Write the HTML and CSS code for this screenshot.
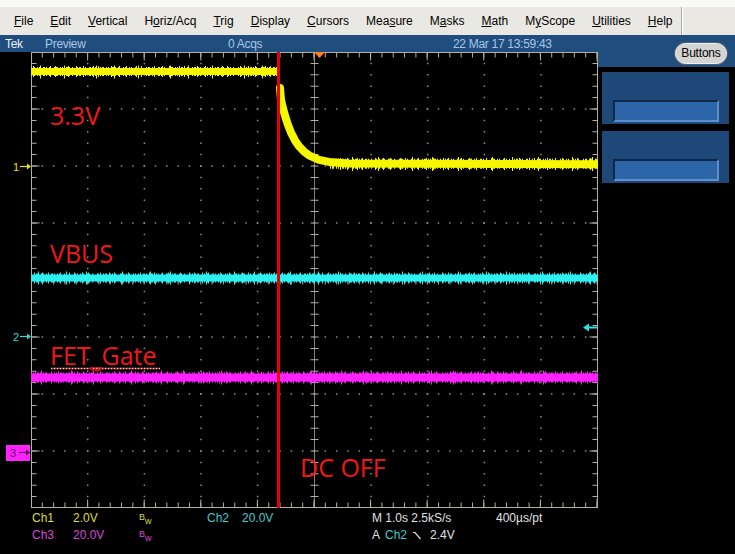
FILE: index.html
```html
<!DOCTYPE html>
<html>
<head>
<meta charset="utf-8">
<title>Tek Scope</title>
<link rel="stylesheet" href="styles.css">
</head>
<body>
<header class="menubar">
  <nav class="menu">
    <span class="mi"><u>F</u>ile</span>
    <span class="mi"><u>E</u>dit</span>
    <span class="mi"><u>V</u>ertical</span>
    <span class="mi">H<u>o</u>riz/Acq</span>
    <span class="mi"><u>T</u>rig</span>
    <span class="mi"><u>D</u>isplay</span>
    <span class="mi"><u>C</u>ursors</span>
    <span class="mi">Mea<u>s</u>ure</span>
    <span class="mi">M<u>a</u>sks</span>
    <span class="mi"><u>M</u>ath</span>
    <span class="mi">M<u>y</u>Scope</span>
    <span class="mi"><u>U</u>tilities</span>
    <span class="mi"><u>H</u>elp</span>
  </nav>
  <div class="menu-sep"></div>
</header>
<div class="main">
  <section class="scope">
    <div class="status">
      <span class="st-tek">Tek</span>
      <span class="st-preview">Preview</span>
      <span class="st-acqs">0 Acqs</span>
      <span class="st-date">22 Mar 17 13:59:43</span>
    </div>
    <svg class="screen" width="598" height="458" viewBox="0 52 598 458" xmlns="http://www.w3.org/2000/svg">
      <rect x="0" y="52" width="598" height="458" fill="#000"/>
      <!-- dotted grid -->
      <g stroke="#8e8e8e" stroke-width="1.5" fill="none">
        <path stroke-dasharray="1.5 9.82" stroke-dashoffset="0.75" d="M31 109H598M31 166H598M31 223H598M31 337H598M31 394H598M31 451H598"/>
        <path stroke-dasharray="1.5 9.9" stroke-dashoffset="0.75" d="M87.7 52V508M144.4 52V508M201 52V508M257.6 52V508M371.1 52V508M427.7 52V508M484.4 52V508M541 52V508"/>
      </g>
      <!-- border, ticks, center cross -->
      <g stroke="#b2b09c" fill="none">
        <rect x="31.5" y="52.5" width="566" height="455"/>
        <path stroke-width="5" stroke-dasharray="1 10.32" stroke-dashoffset="0.5" d="M31 55H598M31 505H598"/>
        <path stroke-width="8" stroke-dasharray="1 55.6" stroke-dashoffset="0.5" d="M31 56.5H598M31 503.5H598"/>
        <path stroke-width="5" stroke-dasharray="1 10.4" stroke-dashoffset="0.5" d="M34 52V508M595 52V508"/>
        <path stroke-width="8" stroke-dasharray="1 56" stroke-dashoffset="0.5" d="M35.5 52V508M593.5 52V508"/>
        <path stroke-width="1" opacity="0.75" d="M314.5 52V508M31 280.5H598"/>
        <path stroke-width="8" stroke-dasharray="1 10.4" stroke-dashoffset="0.5" d="M314.5 52V508"/>
        <path stroke-width="8" stroke-dasharray="1 10.32" stroke-dashoffset="0.5" d="M31 280.5H598"/>
      </g>
      <!-- trigger position marker -->
      <polygon points="314,52 325,52 319.5,58" fill="#ff7d1e"/>
      <!-- channel 1 (yellow) -->
      <g stroke="#f6f600" fill="none">
        <path stroke-width="7" d="M31 71.5H277"/>
        <path stroke-width="9" stroke-dasharray="1 1 2 2 1 1 1 3 2 1 1 2 1 4" d="M31 71.5H277"/>
        <path stroke-width="11" stroke-dasharray="1 6 1 9 1 4 1 12 1 7" d="M33 71.5H277"/>
        <path stroke-width="13" stroke-dasharray="1 23 1 31 1 17" d="M40 72H277"/>
        <path stroke-width="8" stroke-linejoin="round" stroke-linecap="round" d="M280 88L281 99.9L283 108.4L285 115.8L288 125.1L291 132.6L295 140.4L299 146.3L304 151.6L309 155.3L319 159.8L329 161.9L349 163.5L598 164.2"/>
        <path stroke-width="10" stroke-dasharray="1 1 2 2 1 1 1 3 2 1 1 2 1 4" d="M330 163.8H598"/>
        <path stroke-width="12" stroke-dasharray="1 6 1 9 1 4 1 12 1 7" d="M340 164H598"/>
        <path stroke-width="14" stroke-dasharray="1 25 1 33 1 19" d="M352 164H598"/>
      </g>
      <!-- channel 2 (cyan) -->
      <g stroke="#2ef0f0" fill="none">
        <path stroke-width="7" d="M31 278H598"/>
        <path stroke-width="9" stroke-dasharray="1 2 1 1 2 3 1 1 1 2 1 4 2 1" d="M31 278H598"/>
        <path stroke-width="11" stroke-dasharray="1 7 1 5 1 11 1 8 1 4" d="M34 278H598"/>
        <path stroke-width="13" stroke-dasharray="1 27 1 19 1 35" d="M38 278H598"/>
      </g>
      <!-- channel 3 (magenta) -->
      <g stroke="#ff22ff" fill="none">
        <path stroke-width="8" d="M31 377.5H598"/>
        <path stroke-width="10" stroke-dasharray="1 1 1 3 2 1 1 2 1 1 2 4 1 2" d="M31 377.5H598"/>
        <path stroke-width="12" stroke-dasharray="1 5 1 9 1 6 1 13 1 4" d="M35 377.5H598"/>
        <path stroke-width="14" stroke-dasharray="1 29 1 21 1 37" d="M41 377.5H598"/>
      </g>
      <!-- red annotation line -->
      <path d="M278.5 52V508" stroke="#e60000" stroke-width="3"/>
      <!-- annotation labels -->
      <g class="note">
        <text x="50" y="125">3.3V</text>
        <text x="50" y="263">VBUS</text>
        <text x="50" y="365">FET_Gate</text>
        <text x="300" y="477">DC OFF</text>
      </g>
      <path d="M51 368.5H160" stroke="#f4d8d8" stroke-width="1.5" stroke-dasharray="1.5 1.5" fill="none"/>
      <path d="M52.5 368.5H160" stroke="#e02020" stroke-width="1.5" stroke-dasharray="1.5 1.5" fill="none"/>
      <path d="M90 368Q96 373 102 368" stroke="#e01010" stroke-width="2" fill="none"/>
      <!-- channel markers -->
      <text class="mk" x="13" y="170.5" fill="#e8e800">1</text>
      <path d="M20 166.5H28" stroke="#e8e800" stroke-width="1.2"/>
      <polygon points="27,163.5 31,166.5 27,169.5" fill="#e8e800"/>
      <text class="mk" x="13" y="340.5" fill="#30d8d8">2</text>
      <path d="M20 336.5H28" stroke="#30d8d8" stroke-width="1.2"/>
      <polygon points="27,333.5 31,336.5 27,339.5" fill="#30d8d8"/>
      <rect x="6" y="445" width="24" height="16" fill="#ff22ff"/>
      <text class="mk" x="10" y="457" fill="#5a0a5a">3</text>
      <path d="M19 452.5H27" stroke="#5a0a5a" stroke-width="1.2"/>
      <polygon points="26,449.5 30,452.5 26,455.5" fill="#5a0a5a"/>
      <!-- trigger level arrow -->
      <path d="M587 327.5H597" stroke="#30e0e0" stroke-width="2"/>
      <polygon points="583,327.5 589,323.5 589,331.5" fill="#30e0e0"/>
    </svg>
    <div class="readout">
      <div class="row">
        <span class="c1 yel">Ch1</span>
        <span class="c2 yel">2.0V</span>
        <span class="c3 yel"><span class="bw">B<span class="w">w</span></span></span>
        <span class="c4 cya">Ch2</span>
        <span class="c5 cya">20.0V</span>
        <span class="c6 wht">M 1.0s 2.5kS/s</span>
        <span class="wht">400µs/pt</span>
      </div>
      <div class="row">
        <span class="c1 mag">Ch3</span>
        <span class="c2 mag">20.0V</span>
        <span class="c3 mag"><span class="bw">B<span class="w">w</span></span></span>
        <span class="gap"></span>
        <span class="ca wht">A</span>
        <span class="cb cya">Ch2</span>
        <span class="cc wht"><svg class="slope" width="9" height="9" viewBox="0 0 9 9"><path d="M0 1.5H2L7.5 8" stroke="#e0e0e0" stroke-width="1.2" fill="none"/></svg></span>
        <span class="wht">2.4V</span>
      </div>
    </div>
  </section>
  <aside class="side">
    <div class="side-top"><span class="pill">Buttons</span></div>
    <div class="box"><div class="bar"></div></div>
    <div class="box"><div class="bar"></div></div>
  </aside>
</div>
</body>
</html>
```
FILE: styles.css
```css
html, body {
  margin: 0;
  padding: 0;
}
body {
  width: 735px;
  height: 554px;
  overflow: hidden;
  background: #000;
  font-family: "Liberation Sans", Arial, sans-serif;
}

/* menu bar */
.menubar {
  height: 35px;
  box-sizing: border-box;
  padding-top: 7px;
  background: linear-gradient(#f9f9f7 0 7px, #e9e8e2 7px);
  display: flex;
  align-items: stretch;
}
.menu {
  display: flex;
  align-items: center;
  gap: 17px;
  padding-left: 14px;
  font-size: 12px;
  color: #000;
}
.mi u {
  text-decoration: underline;
  text-underline-offset: 1px;
}
.menu-sep {
  margin-left: 8px;
  width: 0;
  border-left: 1px solid #a8a8a0;
  border-right: 1px solid #ffffff;
}

/* main layout */
.main {
  display: grid;
  grid-template-columns: 598px 137px;
  align-items: start;
}
.scope {
  display: flex;
  flex-direction: column;
}
.status {
  height: 17px;
  background: #1f4d7d;
  display: flex;
  align-items: center;
  font-size: 12px;
  letter-spacing: -0.3px;
  color: #a9c6e6;
  white-space: nowrap;
}
.st-tek {
  width: 45px;
  padding-left: 5px;
  box-sizing: border-box;
  color: #eef3fa;
}
.st-preview { width: 183px; }
.st-acqs { width: 225px; }

.screen {
  display: block;
}
.note text {
  font-family: "Open Sans", "Noto Sans", sans-serif;
  font-size: 25px;
  fill: #f01818;
}
.mk {
  font-family: "Liberation Sans", Arial, sans-serif;
  font-size: 11px;
}

/* readout */
.readout {
  height: 44px;
  box-sizing: border-box;
  padding: 1px 0 0 32px;
  font-size: 12px;
  line-height: 13px;
  white-space: nowrap;
}
.row {
  display: flex;
  align-items: baseline;
}
.c1 { width: 41px; }
.c2 { width: 66px; }
.c3 { width: 68px; }
.c4 { width: 35px; }
.c5 { width: 130px; }
.c6 { width: 124px; }
.gap { width: 165px; }
.ca { width: 13px; }
.cb { width: 28px; }
.cc { width: 17px; }
.yel { color: #dcdc44; }
.cya { color: #44caca; }
.mag { color: #d848d8; }
.wht { color: #e2e2e2; }
.bw {
  font-size: 9px;
  vertical-align: 2px;
}
.bw .w {
  vertical-align: -4px;
}
.slope {
  vertical-align: -1px;
}

/* right side panel */
.side {
  background: #000;
  display: flex;
  flex-direction: column;
}
.side-top {
  height: 32px;
  box-sizing: border-box;
  background: #1f4d7d;
  display: flex;
  justify-content: flex-end;
  align-items: flex-start;
  padding: 8px 8px 0 0;
}
.pill {
  width: 52px;
  height: 21px;
  box-sizing: border-box;
  border-radius: 11px;
  background: #d4d4d2;
  border: 1px solid #f0f0f0;
  box-shadow: 0 0 0 1px #50607a;
  font-size: 12px;
  line-height: 19px;
  text-align: center;
  color: #000;
  letter-spacing: -0.2px;
}
.box {
  height: 52px;
  box-sizing: border-box;
  margin: 5px 6px 0 4px;
  padding: 28px 10px 2px 11px;
  background: #1e4877;
}
.box + .box {
  margin-top: 7px;
}
.bar {
  height: 22px;
  box-sizing: border-box;
  background: #2d66a8;
  border-top: 2px solid #0d2749;
  border-left: 2px solid #0d2749;
  border-bottom: 2px solid #5b90cc;
  border-right: 2px solid #5b90cc;
}
```
